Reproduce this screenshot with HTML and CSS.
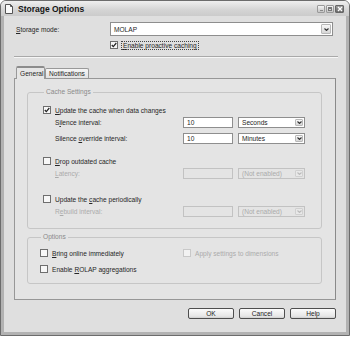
FILE: index.html
```html
<!DOCTYPE html>
<html lang="en">
  <head>
    <meta charset="UTF-8" />
    <title>Storage Options</title>
    <link rel="stylesheet" href="styles.css">
  </head>
  <body>
    <div class="window">
      <div class="titlebar">
        <svg class="app-icon" width="8" height="10" viewBox="0 0 8 10">
          <path d="M0.5 0.5h5l2 2v7h-7z" fill="#fafafa" stroke="#555" />
          <path d="M5.5 0.5v2h2" fill="none" stroke="#555" />
        </svg>
        <span class="title">Storage Options</span>
        <div class="ctrls">
          <span class="ctrl"><i class="min"></i></span>
          <span class="ctrl"><i class="max"></i></span>
          <span class="ctrl close">
            <svg width="6" height="6" viewBox="0 0 6 6"><path d="M1 1l4 4M5 1l-4 4" stroke="#fff" stroke-width="1.3" /></svg>
          </span>
        </div>
      </div>

      <div class="body">
        <div class="mode-row">
          <label class="mode-label"><u>S</u>torage mode:</label>
          <div class="combo wide">
            <span class="value">MOLAP</span>
            <span class="arrow"><svg width="5" height="3" viewBox="0 0 5 3"><path d="M0.5 0.5l2 2l2-2" fill="none" stroke="#333" stroke-width="1.1" /></svg></span>
          </div>
        </div>

        <div class="proactive">
          <span class="cb checked"><svg width="6" height="6" viewBox="0 0 6 6"><path d="M0.8 3l1.5 1.6l3-3.6" fill="none" stroke="#222" stroke-width="1.2" /></svg></span>
          <span class="focus"><u>E</u>nable proactive caching</span>
        </div>

        <div class="sep"></div>

        <div class="tabs">
          <span class="tab active">General</span>
          <span class="tab">Notifications</span>
        </div>

        <div class="panel">
          <fieldset class="group cache">
            <legend>Cache Settings</legend>

            <div class="check-row">
              <span class="cb checked"><svg width="6" height="6" viewBox="0 0 6 6"><path d="M0.8 3l1.5 1.6l3-3.6" fill="none" stroke="#222" stroke-width="1.2" /></svg></span>
              <span><u>U</u>pdate the cache when data changes</span>
            </div>
            <div class="field-row">
              <span class="field-label">S<u>i</u>lence interval:</span>
              <span class="text-box">10</span>
              <div class="combo small"><span class="value">Seconds</span><span class="arrow"><svg width="5" height="3" viewBox="0 0 5 3"><path d="M0.5 0.5l2 2l2-2" fill="none" stroke="#333" stroke-width="1.1" /></svg></span></div>
            </div>
            <div class="field-row">
              <span class="field-label">Silence <u>o</u>verride interval:</span>
              <span class="text-box">10</span>
              <div class="combo small"><span class="value">Minutes</span><span class="arrow"><svg width="5" height="3" viewBox="0 0 5 3"><path d="M0.5 0.5l2 2l2-2" fill="none" stroke="#333" stroke-width="1.1" /></svg></span></div>
            </div>

            <div class="check-row">
              <span class="cb"></span>
              <span><u>D</u>rop outdated cache</span>
            </div>
            <div class="field-row disabled">
              <span class="field-label"><u>L</u>atency:</span>
              <span class="text-box"></span>
              <div class="combo small"><span class="value">(Not enabled)</span><span class="arrow"><svg width="5" height="3" viewBox="0 0 5 3"><path d="M0.5 0.5l2 2l2-2" fill="none" stroke="#bbb" stroke-width="1.1" /></svg></span></div>
            </div>

            <div class="check-row">
              <span class="cb"></span>
              <span>Update the <u>c</u>ache periodically</span>
            </div>
            <div class="field-row disabled">
              <span class="field-label">R<u>e</u>build interval:</span>
              <span class="text-box"></span>
              <div class="combo small"><span class="value">(Not enabled)</span><span class="arrow"><svg width="5" height="3" viewBox="0 0 5 3"><path d="M0.5 0.5l2 2l2-2" fill="none" stroke="#bbb" stroke-width="1.1" /></svg></span></div>
            </div>
          </fieldset>

          <fieldset class="group options">
            <legend>Options</legend>
            <div class="opt-grid">
              <div class="check-row">
                <span class="cb"></span>
                <span><u>B</u>ring online immediately</span>
              </div>
              <div class="check-row disabled">
                <span class="cb"></span>
                <span>Apply settings to dimensions</span>
              </div>
              <div class="check-row">
                <span class="cb"></span>
                <span>Enable <u>R</u>OLAP aggregations</span>
              </div>
            </div>
          </fieldset>
        </div>

        <div class="buttons">
          <button class="btn">OK</button>
          <button class="btn">Cancel</button>
          <button class="btn">Help</button>
        </div>
      </div>
    </div>
  </body>
</html>
```

FILE: styles.css
```css
* {
  margin: 0;
  padding: 0;
  box-sizing: border-box;
}

body {
  background-color: #ffffff;
  font-family: "Liberation Sans", Arial, sans-serif;
  font-size: 6.6px;
  color: #262626;
}

.window {
  width: 350px;
  height: 336px;
  border: 1px solid #6c6c6c;
  border-radius: 6px 6px 0 0;
  background-color: #dfdfdf;
  display: flex;
  flex-direction: column;
  overflow: hidden;
}

.titlebar {
  height: 15px;
  flex-shrink: 0;
  display: flex;
  align-items: center;
  padding: 0 4px;
  background: linear-gradient(#efefef, #d4d4d4 60%, #cbcbcb);
}

.app-icon {
  margin-right: 5px;
}

.title {
  font-size: 8.5px;
  font-weight: bold;
  color: #151515;
}

.ctrls {
  margin-left: auto;
  display: flex;
  gap: 1px;
  margin-right: 1px;
}

.ctrl {
  width: 8px;
  height: 8px;
  border: 1px solid #9a9a9a;
  border-radius: 1px;
  background: linear-gradient(#f4f4f4, #c4c4c4);
  display: flex;
  align-items: center;
  justify-content: center;
}

.ctrl .min {
  display: block;
  width: 3px;
  height: 1px;
  margin-top: 3px;
  background-color: #888;
}

.ctrl .max {
  display: block;
  width: 4px;
  height: 4px;
  border: 1px solid #777;
  border-top-width: 2px;
}

.ctrl.close {
  width: 9px;
  background: linear-gradient(#9e9e9e, #6a6a6a);
  border-color: #666;
}

.body {
  flex: 1;
  border: solid #b2b2b2;
  border-width: 0 3px 3px;
  padding: 6px 6px 0 10px;
  display: flex;
  flex-direction: column;
}

.mode-row {
  display: flex;
  align-items: center;
}

.mode-label {
  width: 96px;
  padding-left: 2px;
}

.combo {
  height: 14px;
  background-color: #ffffff;
  border: 1px solid #8e8e8e;
  display: flex;
  align-items: center;
  padding-left: 3px;
}

.combo .value {
  flex: 1;
}

.combo .arrow {
  width: 10px;
  align-self: stretch;
  margin: 1px;
  border: 1px solid #b8b8b8;
  border-radius: 1px;
  background: linear-gradient(#f8f8f8, #d6d6d6);
  display: flex;
  align-items: center;
  justify-content: center;
}

.combo.wide {
  width: 223px;
}

.proactive {
  display: flex;
  align-items: center;
  margin: 5px 0 0 96px;
}

.proactive .cb {
  margin-right: 4px;
}

.focus {
  outline: 1px dotted #444;
  padding: 0 1px;
}

.cb {
  width: 8px;
  height: 8px;
  flex-shrink: 0;
  border: 1px solid #6e6e6e;
  background-color: #f7f7f7;
  display: flex;
  align-items: center;
  justify-content: center;
}

.sep {
  width: 324px;
  height: 2px;
  margin-top: 7px;
  border-top: 1px solid #a9a9a9;
  border-bottom: 1px solid #f6f6f6;
}

.tabs {
  display: flex;
  align-items: flex-end;
  height: 12px;
  margin: 8px 0 0 2px;
  position: relative;
  z-index: 1;
}

.tab {
  height: 10px;
  padding: 0 3px;
  border: 1px solid #999;
  border-bottom: none;
  border-radius: 2px 2px 0 0;
  background: linear-gradient(#f6f6f6, #e2e2e2);
  display: flex;
  align-items: center;
}

.tab.active {
  width: 29px;
  padding-left: 3px;
  background-color: #e6e6e6;
  background-image: none;
  border-top: 2px solid #8c8c8c;
  margin-bottom: -1px;
  height: 13px;
}

.panel {
  width: 322px;
  height: 222px;
  border: 1px solid #979797;
  border-right-color: #8a8a8a;
  background-color: #e4e4e4;
  padding: 9px 13px 0 12px;
}

.group {
  border: 1px solid #c6c6c6;
  border-radius: 3px;
  padding: 0 0 0 15px;
}

.group legend {
  color: #8a8a8a;
  line-height: 8px;
  padding: 0 2px;
  margin-left: 1px;
}

.cache {
  height: 141px;
}

.check-row {
  display: flex;
  align-items: center;
  gap: 4px;
  height: 8px;
}

.field-row {
  display: flex;
  align-items: center;
  height: 11px;
  padding-left: 12px;
}

/* vertical rhythm of the cache settings block */
.cache .check-row:nth-of-type(1) {
  margin-top: 10px;
}

.cache .field-row:nth-of-type(2) {
  margin-top: 3px;
}

.cache .field-row:nth-of-type(3) {
  margin-top: 5px;
}

.cache .check-row:nth-of-type(4) {
  margin-top: 13px;
}

.cache .field-row:nth-of-type(5) {
  margin-top: 3px;
}

.cache .check-row:nth-of-type(6) {
  margin-top: 16px;
}

.cache .field-row:nth-of-type(7) {
  margin-top: 3px;
}

.field-label {
  width: 128px;
}

.text-box {
  width: 50px;
  height: 11px;
  margin-right: 5px;
  background-color: #ffffff;
  border: 1px solid #8e8e8e;
  padding-left: 3px;
  line-height: 9px;
}

.combo.small {
  width: 67px;
  height: 11px;
}

.combo.small .arrow {
  width: 8px;
}

.disabled {
  color: #ababab;
}

.disabled .text-box,
.disabled .combo {
  background-color: #e4e4e4;
  border-color: #c2c2c2;
}

.disabled .arrow {
  background: #e8e8e8;
  border-color: #d0d0d0;
}

.options {
  margin-top: 4px;
  height: 51px;
  padding-left: 12px;
}

.opt-grid {
  display: grid;
  grid-template-columns: 143px 1fr;
  row-gap: 8px;
  margin-top: 8px;
}

.check-row.disabled .cb {
  border-color: #c8c8c8;
  background-color: #f2f2f2;
}

.buttons {
  display: flex;
  justify-content: flex-end;
  gap: 5px;
  margin: 8px 4px 0 0;
}

.btn {
  width: 46px;
  height: 11px;
  font-family: inherit;
  font-size: 6.6px;
  color: #1c1c1c;
  border: 1px solid #4e4e4e;
  border-radius: 2px;
  background: linear-gradient(#fbfbfb, #e6e6e6 80%, #cfcfcf);
}
```
